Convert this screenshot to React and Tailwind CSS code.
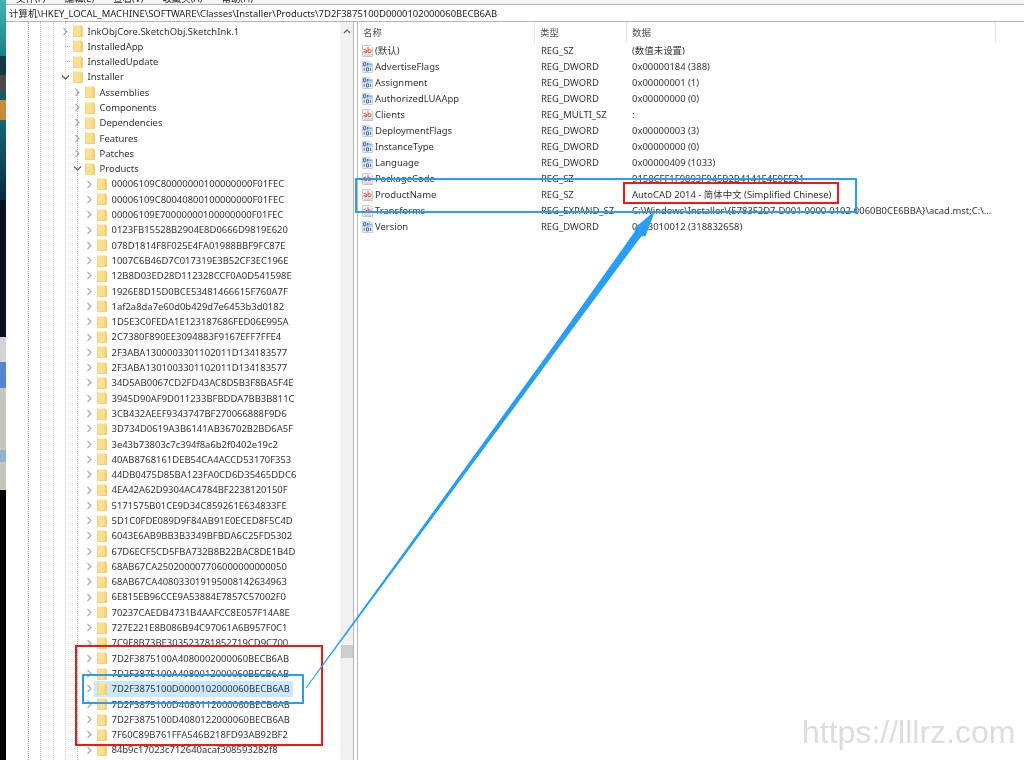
const SELECTED = "7D2F3875100D0000102000060BECB6AB";

const treeRows = [
  [0, "InkObjCore.SketchObj.SketchInk.1", "r"],
  [0, "InstalledApp", ""],
  [0, "InstalledUpdate", ""],
  [0, "Installer", "d"],
  [1, "Assemblies", "r"],
  [1, "Components", "r"],
  [1, "Dependencies", "r"],
  [1, "Features", "r"],
  [1, "Patches", "r"],
  [1, "Products", "d"],
  ...[
    "00006109C80000000100000000F01FEC",
    "00006109C80040800100000000F01FEC",
    "00006109E70000000100000000F01FEC",
    "0123FB15528B2904E8D0666D9819E620",
    "078D1814F8F025E4FA01988BBF9FC87E",
    "1007C6B46D7C017319E3B52CF3EC196E",
    "12B8D03ED28D112328CCF0A0D541598E",
    "1926E8D15D0BCE53481466615F760A7F",
    "1af2a8da7e60d0b429d7e6453b3d0182",
    "1D5E3C0FEDA1E123187686FED06E995A",
    "2C7380F890EE3094883F9167EFF7FFE4",
    "2F3ABA1300003301102011D134183577",
    "2F3ABA1301003301102011D134183577",
    "34D5AB0067CD2FD43AC8D5B3F8BA5F4E",
    "3945D90AF9D011233BFBDDA7BB3B811C",
    "3CB432AEEF9343747BF270066888F9D6",
    "3D734D0619A3B6141AB36702B2BD6A5F",
    "3e43b73803c7c394f8a6b2f0402e19c2",
    "40AB8768161DEB54CA4ACCD53170F353",
    "44DB0475D85BA123FA0CD6D35465DDC6",
    "4EA42A62D9304AC4784BF2238120150F",
    "5171575B01CE9D34C859261E634833FE",
    "5D1C0FDE089D9F84AB91E0ECED8F5C4D",
    "6043E6AB9BB3B3349BFBDA6C25FD5302",
    "67D6ECF5CD5FBA732B8B22BAC8DE1B4D",
    "68AB67CA250200007706000000000050",
    "68AB67CA408033019195008142634963",
    "6E815EB96CCE9A53884E7857C57002F0",
    "70237CAEDB4731B4AAFCC8E057F14A8E",
    "727E221E8B086B94C97061A6B957F0C1",
    "7C9F8B73BE303523781852719CD9C700",
    "7D2F3875100A4080002000060BECB6AB",
    "7D2F3875100A4080012000060BECB6AB",
    SELECTED,
    "7D2F3875100D4080112000060BECB6AB",
    "7D2F3875100D4080122000060BECB6AB",
    "7F60C89B761FFA546B218FD93AB92BF2",
    "84b9c17023c712640acaf308593282f8",
  ].map((t) => [2, t, "r"]),
];

const values = [
  ["s", "(默认)", "REG_SZ", "(数值未设置)"],
  ["b", "AdvertiseFlags", "REG_DWORD", "0x00000184 (388)"],
  ["b", "Assignment", "REG_DWORD", "0x00000001 (1)"],
  ["b", "AuthorizedLUAApp", "REG_DWORD", "0x00000000 (0)"],
  ["s", "Clients", "REG_MULTI_SZ", ":"],
  ["b", "DeploymentFlags", "REG_DWORD", "0x00000003 (3)"],
  ["b", "InstanceType", "REG_DWORD", "0x00000000 (0)"],
  ["b", "Language", "REG_DWORD", "0x00000409 (1033)"],
  ["s", "PackageCode", "REG_SZ", "9158CFF1F9893F945B2B4141E4E9E521"],
  ["s", "ProductName", "REG_SZ", "AutoCAD 2014 - 简体中文 (Simplified Chinese)"],
  ["s", "Transforms", "REG_EXPAND_SZ", "C:\\Windows\\Installer\\{5783F2D7-D001-0000-0102-0060B0CE6BBA}\\acad.mst;C:\\..."],
  ["b", "Version", "REG_DWORD", "0x13010012 (318832658)"],
];

function Folder() {
  return (
    <svg width="10" height="12" viewBox="0 0 10 12" className="shrink-0 block">
      <path d="M0 0.5 H9 V1.5 H10 V12 H0 Z" fill="#fcdf93" />
      <path d="M7.5 0.5 H9 V1.5 H10 V12 H7.5 Z" fill="#f8cf72" />
      <path d="M0.4 0.5 V11.6 H9.6" fill="none" stroke="#eecb7c" strokeWidth="0.7" />
    </svg>
  );
}

function Chevron({ kind }) {
  if (!kind) {
    return (
      <span className="w-[9px] shrink-0 flex justify-end">
        <span className="w-[5px] border-t border-dotted border-[#b5b5b5]" />
      </span>
    );
  }
  return (
    <svg width="9" height="9" viewBox="0 0 9 9" className="shrink-0">
      <path
        d={kind === "r" ? "M2.5 1 L6 4.5 L2.5 8" : "M1 2.5 L4.5 6 L8 2.5"}
        fill="none"
        stroke={kind === "r" ? "#a8a8a8" : "#555"}
        strokeWidth="1.1"
      />
    </svg>
  );
}

function ValIcon({ kind }) {
  if (kind === "s") {
    return (
      <svg width="11" height="12" viewBox="0 0 11 12" className="shrink-0">
        <path d="M0.5 0.5 H8 L10.5 3 V11.5 H0.5 Z" fill="#fff" stroke="#b9b9c4" strokeWidth="0.8" />
        <path d="M1.6 4.6 Q3.8 3.6 4.4 5 V8 M4.4 6.2 Q1.6 5.8 1.6 7.2 Q2.4 8.6 4.4 7.4" fill="none" stroke="#d8452e" strokeWidth="0.95" />
        <path d="M6 1.8 V7.6 Q9.2 8.8 9.2 6 Q9 3.9 6 5" fill="none" stroke="#d8452e" strokeWidth="0.95" />
        <path d="M1.5 10 H9.5" stroke="#9aa0c0" strokeWidth="0.8" />
      </svg>
    );
  }
  return (
    <svg width="11" height="12" viewBox="0 0 11 12" className="shrink-0">
      <path d="M0.5 0.5 H8 L10.5 3 V11.5 H0.5 Z" fill="#fff" stroke="#b9c4d8" strokeWidth="0.8" />
      <path d="M1.6 1.8 H3.8 V4.6 H1.6 Z M5.4 1.8 V4.6 M7 1.8 V4.6 M9 2.6 V4.6 M2.2 6.8 V10 M4.4 6.8 H6.4 V10 H4.4 Z M8.6 6.8 V10" fill="none" stroke="#2f62b8" strokeWidth="1" />
      <path d="M1 5.6 H10" stroke="#8fb0e0" strokeWidth="0.6" />
    </svg>
  );
}

function GuideLines() {
  return (
    <div className="absolute inset-0 pointer-events-none">
      <div className="absolute left-[22px] top-0 bottom-0 border-l border-dotted border-[#a0a0a0]" />
      <div className="absolute left-[34px] top-0 bottom-0 border-l border-dotted border-[#c8c8c8]" />
      <div className="absolute left-[47px] top-0 bottom-0 border-l border-dotted border-[#c8c8c8]" />
      <div className="absolute left-[59px] top-0 bottom-0 border-l border-dotted border-[#c8c8c8]" />
      <div className="absolute left-[71px] top-[70px] bottom-0 border-l border-dotted border-[#b5b5b5]" />
    </div>
  );
}

export default function App() {
  return (
    <div
      className="relative w-[1024px] h-[760px] overflow-hidden bg-white flex text-[#333] text-[9.45px] leading-[15.3px] blur-[0.3px]"
      style={{ fontFamily: '"Noto Sans", "Noto Sans CJK SC", sans-serif' }}
    >
      <div className="w-[6px] shrink-0 flex flex-col">
        <div className="h-[56px] bg-gradient-to-b from-[#3fb6b4] to-[#1c7f86]" />
        <div className="h-[19px] bg-[#123a48]" />
        <div className="h-[17px] bg-[#4a4a4a]" />
        <div className="h-[8px] bg-[#155a66]" />
        <div className="h-[20px] bg-[#c98a3a]" />
        <div className="h-[80px] bg-gradient-to-b from-[#14697a] to-[#0b2a3d]" />
        <div className="h-[137px] bg-[#0a1420]" />
        <div className="h-[25px] bg-[#d4d4d4]" />
        <div className="h-[26px] bg-[#5486d4]" />
        <div className="h-[62px] bg-[#c9c7bb]" />
        <div className="h-[12px] bg-[#8fb4cf]" />
        <div className="h-[28px] bg-[#c9c7bb]" />
        <div className="flex-1 bg-black" />
      </div>
      <div className="flex-1 min-w-0 flex flex-col">
        <div className="h-[4px] bg-[#f5f5f5] overflow-hidden">
          <div className="-mt-[9px] pl-[10px] flex gap-[19px] text-[#222] whitespace-nowrap">
            <span>文件(F)</span>
            <span>编辑(E)</span>
            <span>查看(V)</span>
            <span>收藏夹(A)</span>
            <span>帮助(H)</span>
          </div>
        </div>
        <div className="h-[18px] border-y border-[#b4b4b4] flex items-center pl-[3px] pt-[1px] text-[#222]">
          计算机\HKEY_LOCAL_MACHINE\SOFTWARE\Classes\Installer\Products\7D2F3875100D0000102000060BECB6AB
        </div>
        <div className="flex-1 min-h-0 flex">
          <div className="relative w-[347px] shrink-0 flex">
            <div className="relative flex-1 overflow-hidden pt-[1.5px]">
              <GuideLines />
              {treeRows.map(([lvl, name, chev], i) => (
                <div
                  key={i}
                  className={
                    lvl === 0
                      ? "relative h-[15.3px] flex items-center pl-[55px]"
                      : lvl === 1
                        ? "relative h-[15.3px] flex items-center pl-[67px]"
                        : "relative h-[15.3px] flex items-center pl-[79px]"
                  }
                >
                  <Chevron kind={chev} />
                  <div
                    className={
                      name === SELECTED
                        ? "flex items-center h-[15.3px] pl-[3px] pr-[3px] bg-[#cce8ff]"
                        : "flex items-center h-[15.3px] pl-[3px]"
                    }
                  >
                    <Folder />
                    <span className="ml-[4.5px] whitespace-nowrap">{name}</span>
                  </div>
                </div>
              ))}
            </div>
            <div className="w-[13px] shrink-0 bg-[#f0f0f0] flex flex-col items-center pt-[6px]">
              <svg width="8" height="6" viewBox="0 0 8 6" className="shrink-0">
                <path d="M1 5 L4 2 L7 5" fill="none" stroke="#606060" strokeWidth="1.2" />
              </svg>
              <div className="mt-[611px] w-[12px] h-[13px] shrink-0 bg-[#cdcdcd]" />
            </div>
          </div>
          <div className="w-[5px] shrink-0 border-x border-[#b8b8b8] bg-white" />
          <div className="flex-1 min-w-0">
            <div className="h-[21px] flex items-center text-[#555]">
              <div className="w-[177px] pl-[5px] border-r border-[#e5e5e5] h-full flex items-center">名称</div>
              <div className="w-[92px] pl-[5px] border-r border-[#e5e5e5] h-full flex items-center">类型</div>
              <div className="w-[369px] pl-[5px] border-r border-[#e5e5e5] h-full flex items-center">数据</div>
            </div>
            {values.map(([k, name, type, data]) => (
              <div key={name} className="h-[16px] flex items-center whitespace-nowrap">
                <div className="w-[177px] pl-[4px] flex items-center gap-[2px]">
                  <ValIcon kind={k} />
                  <span>{name}</span>
                </div>
                <div className="w-[92px] pl-[6px]">{type}</div>
                <div className="pl-[5px]">{data}</div>
              </div>
            ))}
          </div>
        </div>
      </div>

      <div className="absolute left-[355px] top-[178px] w-[502px] h-[35px] border-[2px] border-[#2a9df4]" />
      <div className="absolute left-[623px] top-[182px] w-[216px] h-[22px] border-[2px] border-[#f01818]" />
      <div className="absolute left-[75px] top-[645px] w-[248px] h-[101px] border-[2px] border-[#f01818]" />
      <div className="absolute left-[82px] top-[674px] w-[222px] h-[30px] border-[2px] border-[#2a9df4]" />
      <svg className="absolute inset-0 pointer-events-none" width="1024" height="760" viewBox="0 0 1024 760">
        <path
          d="M306.4 688.3 L552 356.6 L641.2 236.4 L645.6 236.1 L655 211 L634.4 227.9 L634.8 231.6 L548 353.4 L305.6 687.7 Z"
          fill="#2a9df4"
        />
      </svg>
      <div
        className="absolute left-[802px] top-[713px] text-[32px] leading-[38px] text-[#dddddd] whitespace-nowrap"
        style={{ fontFamily: '"Liberation Sans", sans-serif' }}
      >
        https://lllrz.com
      </div>
    </div>
  );
}
